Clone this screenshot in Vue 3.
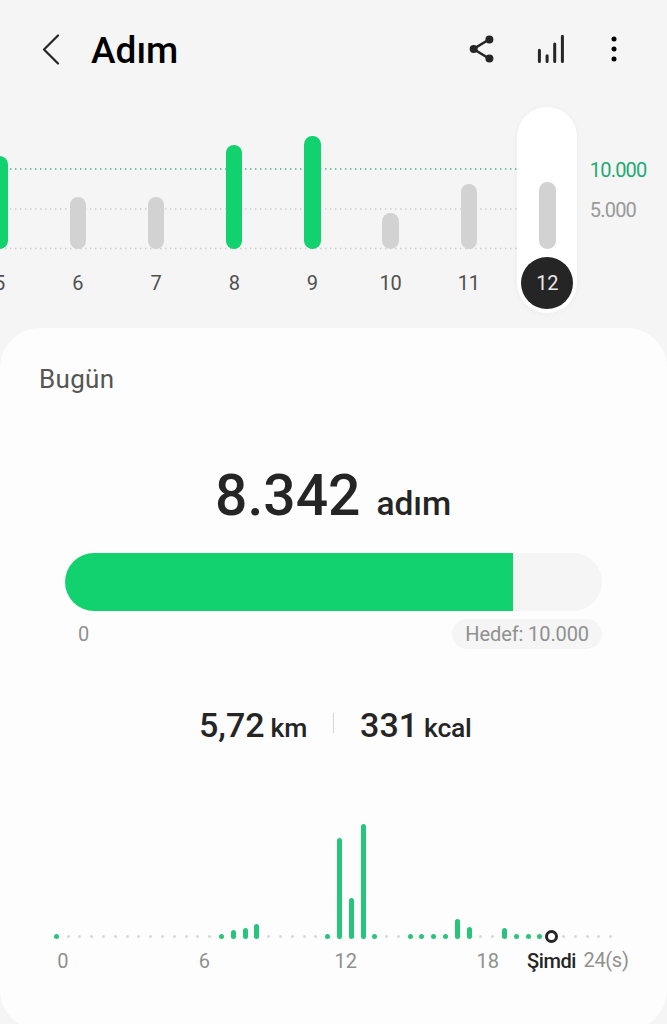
<script setup>
import { ref } from "vue";

// daily bars, height in px above the baseline
const days = ref([
  { day: 5, height: 93, done: true },
  { day: 6, height: 51.5, done: false },
  { day: 7, height: 51.5, done: false },
  { day: 8, height: 104, done: true },
  { day: 9, height: 113, done: true },
  { day: 10, height: 36, done: false },
  { day: 11, height: 65, done: false },
  { day: 12, height: 66.5, done: false },
]);
const selected = ref(12);

// half-hour slots of today, only the ones with steps
const steps = {
  0: 5, 14: 5, 15: 9, 16: 10.5, 17: 14.5, 23: 5, 24: 101, 25: 40.5, 26: 114.5,
  27: 5, 30: 5, 31: 5, 32: 5, 33: 5, 34: 20, 35: 11.5, 38: 11, 39: 5, 40: 5, 41: 5,
};
const now = 42;
const slots = Array.from({ length: 48 }, (_, i) => ({ id: i, height: steps[i] || 0 }));

const progress = ref(83.42);
</script>

<template>
  <div class="screen">
    <header>
      <svg class="back" viewBox="0 0 20 32">
        <path d="M17 2.500L3 16.500L17 30.500" />
      </svg>
      <h1>Adım</h1>
      <svg class="share" viewBox="0 0 26 28">
        <path d="M20 4.500L4.500 14L20 23.500" />
        <circle cx="20.400" cy="4.600" r="4" />
        <circle cx="4.700" cy="14" r="4" />
        <circle cx="20.400" cy="23.500" r="4" />
      </svg>
      <svg class="stats" viewBox="0 0 28 30">
        <path d="M2.400 16.300V27.500M10.100 21.700V27.500M17.700 10V27.500M25.400 2.300V27.500" />
      </svg>
      <svg class="more" viewBox="0 0 6 28">
        <circle cx="3" cy="4" r="2.500" />
        <circle cx="3" cy="14" r="2.500" />
        <circle cx="3" cy="24" r="2.500" />
      </svg>
    </header>

    <section class="week">
      <svg class="lines" viewBox="0 0 518 82">
        <path class="goal" d="M0 1H518" />
        <path d="M0 41H518M0 80.500H518" />
      </svg>
      <div class="days">
        <div v-for="d in days" :key="d.day" class="day" :class="{ selected: d.day === selected }">
          <div class="track">
            <div class="bar" :class="{ done: d.done }" :style="{ height: d.height + 'px' }"></div>
          </div>
          <span class="num">{{ d.day }}</span>
        </div>
      </div>
      <div class="scale">
        <span class="target">10.000</span>
        <span>5.000</span>
      </div>
    </section>

    <main>
      <h2>Bugün</h2>
      <p class="total"><b>8.342</b><span>adım</span></p>
      <div class="progress">
        <div class="fill" :style="{ width: progress + '%' }"></div>
      </div>
      <div class="range">
        <span>0</span>
        <span class="pill">Hedef: 10.000</span>
      </div>
      <div class="facts">
        <p class="km"><b>5,72</b> <span>km</span></p>
        <i></i>
        <p class="kcal"><b>331</b> <span>kcal</span></p>
      </div>
      <div class="slots">
        <div v-for="s in slots" :key="s.id" class="slot">
          <div v-if="s.id === now" class="now"></div>
          <div v-else-if="s.height" class="step" :style="{ height: s.height + 'px' }"></div>
          <div v-else class="dot"></div>
        </div>
      </div>
      <div class="hours">
        <span>0</span>
        <span>6</span>
        <span>12</span>
        <span class="evening">18</span>
        <span class="current">Şimdi</span>
        <span class="end">24(s)</span>
      </div>
    </main>
  </div>
</template>

<style>
body {
  margin: 0;
  background: #f5f5f5;
}
</style>

<style scoped>
.screen {
  width: 667px;
  height: 1024px;
  overflow: hidden;
  display: flex;
  flex-direction: column;
  background: #f5f5f5;
  font-family: Roboto, "Liberation Sans", sans-serif;
  color: #252525;
}

h1,
h2,
p {
  margin: 0;
  font-weight: 400;
}

b {
  font-weight: 500;
}

/* top bar */
header {
  height: 98px;
  display: flex;
  align-items: center;
  flex-shrink: 0;
}

svg {
  fill: none;
  stroke: #252525;
  flex-shrink: 0;
}

.back {
  width: 20px;
  height: 32px;
  margin-left: 41px;
  stroke-width: 2.2;
  stroke-linecap: round;
  stroke-linejoin: round;
}

h1 {
  margin-left: 30px;
  padding-top: 3px;
  width: 378px;
  font-size: 37px;
  font-weight: 500;
  color: #000;
}

.share {
  width: 26px;
  height: 28px;
  stroke-width: 2.6;
}

.share circle,
.more circle {
  fill: #252525;
  stroke: none;
}

.stats {
  width: 28px;
  height: 30px;
  margin-left: 42px;
  stroke-width: 3;
  stroke-linecap: round;
}

.more {
  width: 6px;
  height: 28px;
  margin-left: 46px;
}

.more circle {
  fill: #000;
}

/* week chart */
.week {
  position: relative;
  display: flex;
  height: 230px;
  flex-shrink: 0;
}

.lines {
  position: absolute;
  left: 0;
  top: 70px;
  width: 518px;
  height: 82px;
  stroke: #cbcbcb;
  stroke-width: 1.4;
  stroke-dasharray: 1.4 3.6;
}

.goal {
  stroke: #3fb583;
}

.days {
  position: relative;
  display: flex;
  margin-left: -39.500px;
  height: 215px;
  padding-top: 9px;
}

.day {
  width: 78.2px;
  display: flex;
  flex-direction: column;
  align-items: center;
}

.track {
  height: 141.500px;
  width: 60px;
  display: flex;
  align-items: flex-end;
  justify-content: center;
}

.bar {
  width: 16.400px;
  border-radius: 8.200px;
  background: #d2d2d2;
}

.bar.done {
  background: #12d16f;
}

.num {
  width: 52px;
  height: 52px;
  margin-top: 8.500px;
  border-radius: 50%;
  line-height: 52px;
  text-align: center;
  font-size: 20px;
  letter-spacing: -0.3px;
  color: #505050;
}

.day.selected {
  width: 60px;
  margin-left: 9.500px;
  height: 206px;
  border-radius: 30px;
  background: #fff;
  box-shadow: 0 1px 6px rgba(0, 0, 0, 0.04);
}

.selected .num {
  background: #252525;
  color: #e8e8e8;
}

.scale {
  margin-left: 12.500px;
  padding-top: 59px;
  display: flex;
  flex-direction: column;
  font-size: 20px;
  line-height: 26px;
  letter-spacing: -0.8px;
  gap: 14px;
  color: #999;
}

.target {
  color: #22aa73;
}

/* today card */
main {
  height: 702px;
  flex-shrink: 0;
  border-radius: 40px;
  background: #fdfdfd;
}

h2 {
  padding: 34px 0 0 39px;
  font-size: 26px;
  line-height: 34px;
  letter-spacing: 0.3px;
  color: #555;
}

.total {
  display: flex;
  align-items: baseline;
  margin: 66px 0 0 215px;
  height: 62px;
  line-height: 68px;
}

.total b {
  font-size: 57px;
}

.total span {
  margin-left: 16px;
  font-size: 33.500px;
  font-weight: 500;
}

.progress {
  width: 537px;
  height: 58px;
  margin: 29px 0 0 65px;
  border-radius: 29px;
  background: #f5f5f5;
  overflow: hidden;
}

.fill {
  height: 100%;
  background: #12d16f;
}

.range {
  display: flex;
  justify-content: space-between;
  margin: 8px 65px 0 78px;
  font-size: 20px;
  line-height: 30px;
  letter-spacing: -0.1px;
  color: #909090;
}

.pill {
  padding: 0 13px;
  border-radius: 15px;
  background: #f5f5f5;
}

.facts {
  display: flex;
  margin: 54px 0 0 199px;
  height: 44px;
  line-height: 44px;
}

.facts b {
  font-size: 34px;
}

.facts span {
  margin-left: 2px;
  font-size: 26.500px;
  font-weight: 500;
}

.facts b + span {
  letter-spacing: -0.2px;
}

.facts i {
  width: 1px;
  height: 20px;
  margin: 10px 26px 0;
  background: #d4d4d4;
}

/* half-hour chart */
.slots {
  display: flex;
  align-items: flex-end;
  height: 116px;
  margin: 75.500px 0 0 50.400px;
}

.slot {
  width: 11.800px;
  display: flex;
  justify-content: center;
  flex-shrink: 0;
}

.step {
  width: 5px;
  border-radius: 2.500px;
  background: #27c57b;
}

.dot {
  width: 3px;
  height: 3px;
  margin-bottom: 0.5px;
  border-radius: 50%;
  background: #d8d8d8;
}

.now {
  width: 7px;
  height: 7px;
  margin: 0 -3px -4.500px;
  border: 3px solid #252525;
  border-radius: 50%;
  background: #fff;
  flex-shrink: 0;
}

.hours {
  display: grid;
  grid-template-columns: 141.500px 141.500px 141.500px 107px 56px 53px;
  margin: 9px 0 0 -8px;
  justify-items: center;
  font-size: 20px;
  line-height: 26px;
  color: #909090;
}

.evening {
  justify-self: start;
  margin-left: 60px;
}

.current {
  font-weight: 500;
  letter-spacing: -0.4px;
  color: #252525;
}

.end {
  line-height: 24px;
  letter-spacing: -0.3px;
}
</style>
